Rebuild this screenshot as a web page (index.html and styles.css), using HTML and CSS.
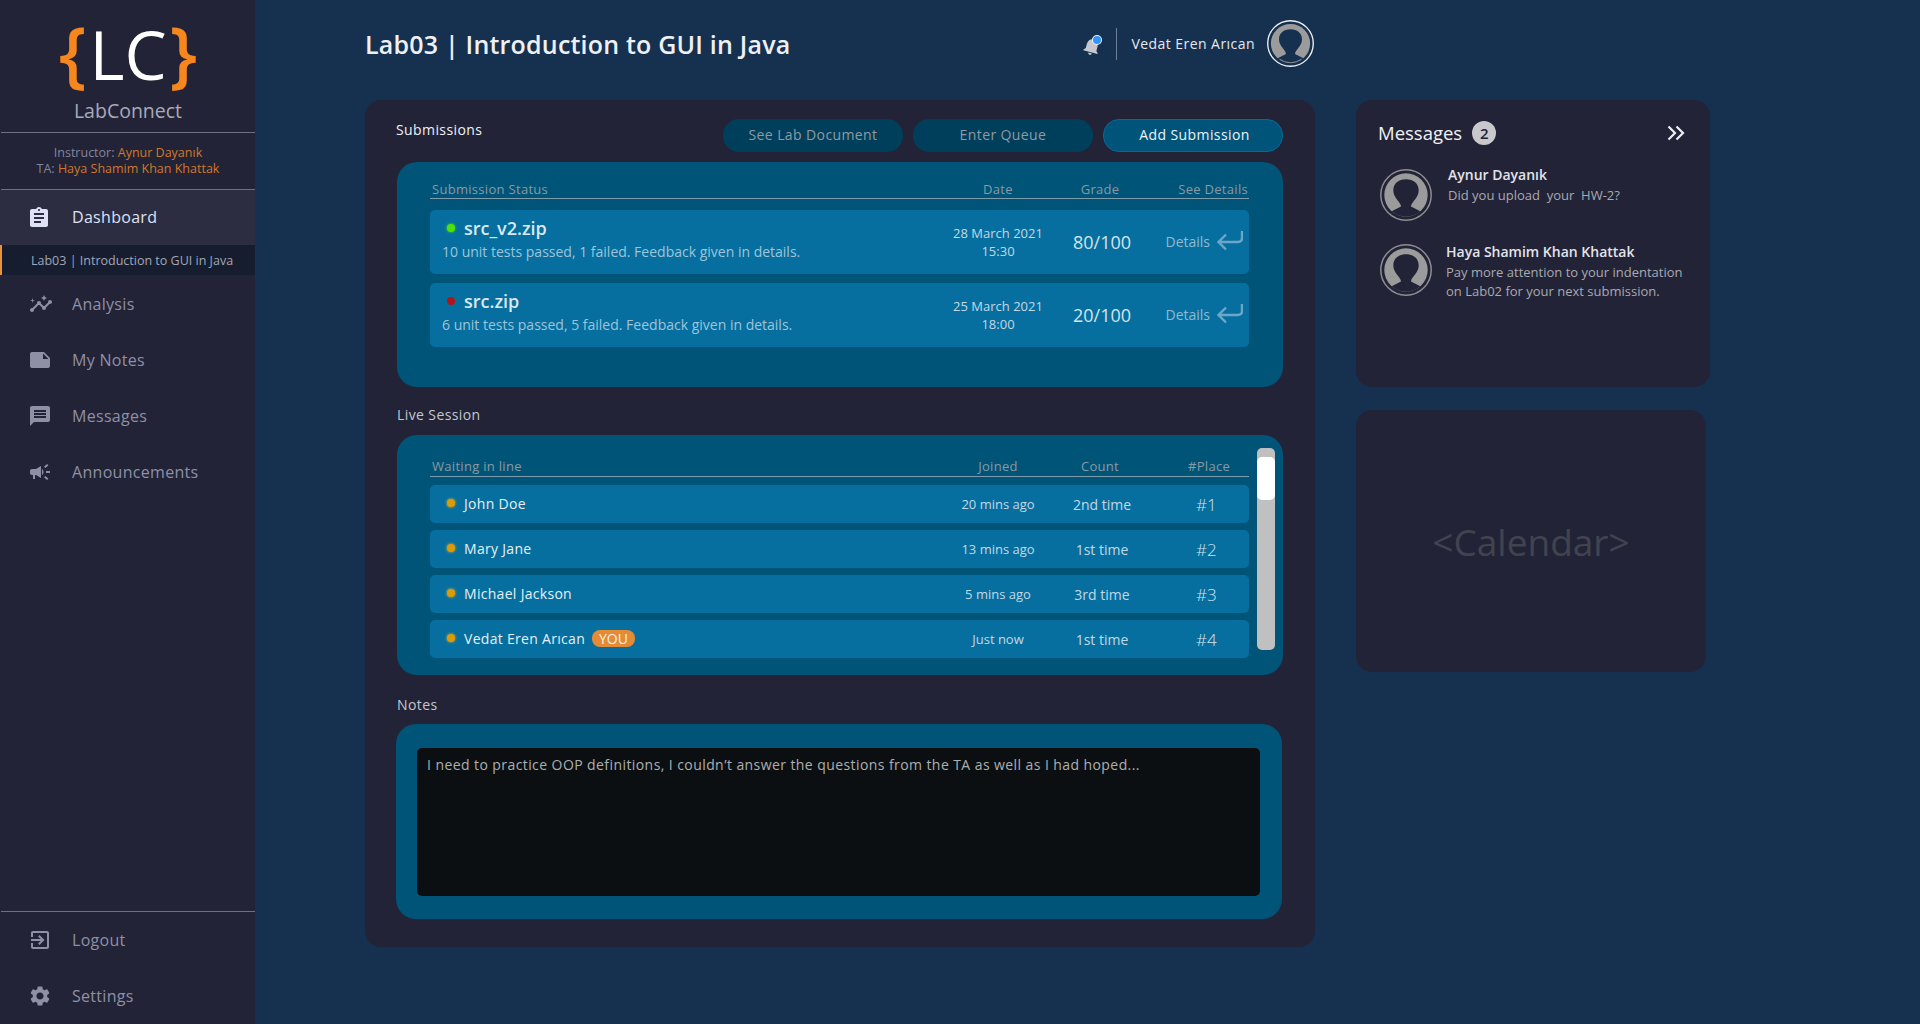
FILE: index.html
```html
<!DOCTYPE html>
<html>
<head>
  <meta charset="utf-8">
  <title>LabConnect</title>
  <link rel="stylesheet" href="styles.css">
</head>
<body>
  <svg class="defs" width="0" height="0">
    <symbol id="avatar" viewBox="0 0 52 52">
      <circle cx="26" cy="26" r="25.2" fill="none" stroke="currentColor" stroke-width="1.5"/>
      <circle cx="26" cy="26" r="21.7" fill="#9b9b9b"/>
      <path d="M11.7 42.3 L21 37.5 C21 33 13.3 29 13.3 21.5 C13.3 14.5 18.5 10.3 26 10.3 C33.5 10.3 38.7 14.5 38.7 21.5 C38.7 29 31 33 31 37.5 L40.3 42.3 A21.7 21.7 0 0 1 11.7 42.3 Z"/>
    </symbol>
    <symbol id="arrow" viewBox="0 0 26 20">
      <path d="M25 0 V7 Q25 11 21 11 H2 M9 3.5 L1.5 11 L9 18.5" fill="none" stroke="currentColor" stroke-width="2.4"/>
    </symbol>
  </svg>

  <aside class="sidebar">
    <div class="brand">
      <div class="logo"><span class="brace">{</span><span class="logo-lc">LC</span><span class="brace">}</span></div>
      <div class="brand-name">LabConnect</div>
    </div>
    <div class="staff">
      <div>Instructor: <span class="staff-name">Aynur Dayanık</span></div>
      <div>TA: <span class="staff-name">Haya Shamim Khan Khattak</span></div>
    </div>

    <nav class="nav">
      <div class="nav-item active">
        <svg class="nav-icon" viewBox="0 0 24 24"><path d="M19 3h-4.18C14.4 1.84 13.3 1 12 1c-1.3 0-2.4.84-2.82 2H5c-1.1 0-2 .9-2 2v14c0 1.1.9 2 2 2h14c1.1 0 2-.9 2-2V5c0-1.1-.9-2-2-2zm-7 0c.55 0 1 .45 1 1s-.45 1-1 1-1-.45-1-1 .45-1 1-1zm2 14H7v-2h7v2zm3-4H7v-2h10v2zm0-4H7V7h10v2z"/></svg>
        <span>Dashboard</span>
      </div>
      <div class="nav-sub">Lab03 | Introduction to GUI in Java</div>
      <div class="nav-item">
        <svg class="nav-icon insights" viewBox="0 0 24 24"><path d="M21 8c-1.45 0-2.26 1.44-1.93 2.51l-3.55 3.56c-.3-.09-.74-.09-1.04 0l-2.55-2.55C12.27 10.45 11.46 9 10 9c-1.45 0-2.27 1.44-1.93 2.52l-4.56 4.55C2.44 15.74 1 16.55 1 18c0 1.1.9 2 2 2 1.45 0 2.26-1.44 1.93-2.51l4.55-4.56c.3.09.74.09 1.04 0l2.55 2.55C12.73 16.55 13.54 18 15 18c1.45 0 2.27-1.44 1.93-2.52l3.56-3.55c1.07.33 2.51-.48 2.51-1.93 0-1.1-.9-2-2-2z"/><path d="M15 9l.94-2.07L18 6l-2.06-.93L15 3l-.92 2.07L12 6l2.08.93zM3.5 11L4 9l2-.5L4 8l-.5-2L3 8l-2 .5L3 9z"/></svg>
        <span>Analysis</span>
      </div>
      <div class="nav-item">
        <svg class="nav-icon" viewBox="0 0 24 24"><path d="M22 10l-6-6H4c-1.1 0-2 .9-2 2v12.01c0 1.1.9 1.99 2 1.99l16-.01c1.1 0 2-.89 2-1.99v-8zm-7-4.5l5.5 5.5H15V5.5z"/></svg>
        <span>My Notes</span>
      </div>
      <div class="nav-item">
        <svg class="nav-icon" viewBox="0 0 24 24"><path d="M20 2H4c-1.1 0-1.99.9-1.99 2L2 22l4-4h14c1.1 0 2-.9 2-2V4c0-1.1-.9-2-2-2zm-2 12H6v-2h12v2zm0-3H6V9h12v2zm0-3H6V6h12v2z"/></svg>
        <span>Messages</span>
      </div>
      <div class="nav-item">
        <svg class="nav-icon" viewBox="0 0 24 24"><path d="M18 11v2h4v-2h-4zm-2 6.61c.96.71 2.21 1.65 3.2 2.39.4-.53.8-1.07 1.2-1.6-.99-.74-2.24-1.68-3.2-2.4-.4.54-.8 1.08-1.2 1.61zM20.4 5.6c-.4-.53-.8-1.07-1.2-1.6-.99.74-2.24 1.68-3.2 2.4.4.53.8 1.07 1.2 1.6.96-.72 2.21-1.65 3.2-2.4zM4 9c-1.1 0-2 .9-2 2v2c0 1.1.9 2 2 2h1v4h2v-4h1l5 3V6L8 9H4zm11.5 3c0-1.33-.58-2.53-1.5-3.35v6.69c.92-.81 1.5-2.01 1.5-3.34z"/></svg>
        <span>Announcements</span>
      </div>
    </nav>

    <div class="nav-bottom">
      <div class="nav-item">
        <svg class="nav-icon" viewBox="0 0 24 24"><path d="M10.09 15.59L11.5 17l5-5-5-5-1.41 1.41L12.67 11H3v2h9.67l-2.58 2.59zM19 3H5c-1.11 0-2 .9-2 2v4h2V5h14v14H5v-4H3v4c0 1.1.89 2 2 2h14c1.1 0 2-.9 2-2V5c0-1.1-.9-2-2-2z"/></svg>
        <span>Logout</span>
      </div>
      <div class="nav-item">
        <svg class="nav-icon" viewBox="0 0 24 24"><path d="M19.14 12.94c.04-.3.06-.61.06-.94 0-.32-.02-.64-.07-.94l2.03-1.58c.18-.14.23-.41.12-.61l-1.92-3.32c-.12-.22-.37-.29-.59-.22l-2.39.96c-.5-.38-1.03-.7-1.62-.94l-.36-2.54c-.04-.24-.24-.41-.48-.41h-3.84c-.24 0-.43.17-.47.41l-.36 2.54c-.59.24-1.13.57-1.62.94l-2.39-.96c-.22-.08-.47 0-.59.22L2.74 8.87c-.12.21-.08.47.12.61l2.03 1.58c-.05.3-.09.63-.09.94s.02.64.07.94l-2.03 1.58c-.18.14-.23.41-.12.61l1.92 3.32c.12.22.37.29.59.22l2.39-.96c.5.38 1.03.7 1.62.94l.36 2.54c.05.24.24.41.48.41h3.84c.24 0 .44-.17.47-.41l.36-2.54c.59-.24 1.13-.56 1.62-.94l2.39.96c.22.08.47 0 .59-.22l1.92-3.32c.12-.22.07-.47-.12-.61l-2.01-1.58zM12 15.6c-1.98 0-3.6-1.62-3.6-3.6s1.62-3.6 3.6-3.6 3.6 1.62 3.6 3.6-1.62 3.6-3.6 3.6z"/></svg>
        <span>Settings</span>
      </div>
    </div>
  </aside>

  <div class="page">
    <header class="topbar">
      <h1 class="page-title">Lab03 | Introduction to GUI in Java</h1>
      <div class="user">
        <div class="bell">
          <svg class="bell-icon" viewBox="0 0 24 24"><path d="M12 22c1.1 0 2-.9 2-2h-4c0 1.1.9 2 2 2zm6-6v-5c0-3.07-1.63-5.64-4.5-6.32V4c0-.83-.67-1.5-1.5-1.5s-1.5.67-1.5 1.5v.68C7.64 5.36 6 7.92 6 11v5l-2 2v1h16v-1l-2-2z"/></svg>
          <span class="bell-dot"></span>
        </div>
        <span class="user-name">Vedat Eren Arıcan</span>
        <svg class="user-avatar" viewBox="0 0 52 52">
          <use href="#avatar"/>
          <path d="M14 43.5 A21 21 0 0 0 38 43.5" fill="none" stroke="#9b9b9b" stroke-width="1"/>
        </svg>
      </div>
    </header>

    <div class="columns">
      <main class="main-card">
        <div class="card-head">
          <div class="section-title first">Submissions</div>
          <div class="actions">
            <button class="btn">See Lab Document</button>
            <button class="btn">Enter Queue</button>
            <button class="btn primary">Add Submission</button>
          </div>
        </div>

        <section class="panel submissions">
          <div class="table-head">
            <span>Submission Status</span>
            <span class="center">Date</span>
            <span class="center head-grade">Grade</span>
            <span class="right">See Details</span>
          </div>
          <div class="rows">
            <div class="row sub-row">
              <div class="file">
                <div class="file-name"><span class="dot green"></span>src_v2.zip</div>
                <div class="file-info">10 unit tests passed, 1 failed. Feedback given in details.</div>
              </div>
              <div class="date">28 March 2021<br>15:30</div>
              <div class="grade">80/100</div>
              <div class="details">Details <svg class="arrow"><use href="#arrow"/></svg></div>
            </div>
            <div class="row sub-row">
              <div class="file">
                <div class="file-name"><span class="dot red"></span>src.zip</div>
                <div class="file-info">6 unit tests passed, 5 failed. Feedback given in details.</div>
              </div>
              <div class="date">25 March 2021<br>18:00</div>
              <div class="grade">20/100</div>
              <div class="details">Details <svg class="arrow"><use href="#arrow"/></svg></div>
            </div>
          </div>
        </section>

        <div class="section-title">Live Session</div>
        <section class="panel live">
          <div class="live-list">
            <div class="table-head">
              <span>Waiting in line</span>
              <span class="center">Joined</span>
              <span class="center head-grade">Count</span>
              <span class="head-place">#Place</span>
            </div>
            <div class="rows live-rows">
              <div class="row queue-row">
                <div class="person"><span class="dot amber"></span>John Doe</div>
                <div class="joined">20 mins ago</div>
                <div class="count">2nd time</div>
                <div class="place">#1</div>
              </div>
              <div class="row queue-row">
                <div class="person"><span class="dot amber"></span>Mary Jane</div>
                <div class="joined">13 mins ago</div>
                <div class="count">1st time</div>
                <div class="place">#2</div>
              </div>
              <div class="row queue-row">
                <div class="person"><span class="dot amber"></span>Michael Jackson</div>
                <div class="joined">5 mins ago</div>
                <div class="count">3rd time</div>
                <div class="place">#3</div>
              </div>
              <div class="row queue-row">
                <div class="person"><span class="dot amber"></span>Vedat Eren Arıcan <span class="you">YOU</span></div>
                <div class="joined">Just now</div>
                <div class="count">1st time</div>
                <div class="place">#4</div>
              </div>
            </div>
          </div>
          <div class="scrollbar"><div class="scroll-thumb"></div></div>
        </section>

        <div class="section-title notes-title">Notes</div>
        <section class="panel notes">
          <div class="note-box">I need to practice OOP definitions, I couldn’t answer the questions from the TA as well as I had hoped...</div>
        </section>
      </main>

      <div class="side-col">
        <section class="messages-card">
          <div class="messages-head">
            <span class="messages-title">Messages</span>
            <span class="badge">2</span>
            <svg class="chevrons" viewBox="0 0 18 16"><path d="M1.5 1.5 L8 8 L1.5 14.5 M9.5 1.5 L16 8 L9.5 14.5" fill="none" stroke="#eceef6" stroke-width="2.2"/></svg>
          </div>
          <div class="message">
            <svg class="msg-avatar" viewBox="0 0 52 52"><use href="#avatar"/></svg>
            <div class="msg-text first-msg">
              <div class="msg-name">Aynur Dayanık</div>
              <div class="msg-body">Did you upload&nbsp; your&nbsp; HW-2?</div>
            </div>
          </div>
          <div class="message">
            <svg class="msg-avatar" viewBox="0 0 52 52"><use href="#avatar"/></svg>
            <div class="msg-text">
              <div class="msg-name">Haya Shamim Khan Khattak</div>
              <div class="msg-body">Pay more attention to your indentation<br>on Lab02 for your next submission.</div>
            </div>
          </div>
        </section>
        <section class="calendar-card">&lt;Calendar&gt;</section>
      </div>
    </div>
  </div>
</body>
</html>
```

FILE: styles.css
```css
* {
  box-sizing: border-box;
}

body {
  margin: 0;
  height: 1024px;
  overflow: hidden;
  display: flex;
  background: #16304f;
  font-family: "Open Sans", "Noto Sans", sans-serif;
  color: #fff;
}

.defs {
  position: absolute;
}

/* sidebar */
.sidebar {
  width: 255px;
  height: 1024px;
  flex: none;
  display: flex;
  flex-direction: column;
  background: #222336;
}

.brand {
  height: 133px;
  margin-left: 1px;
  border-bottom: 1px solid #6e6f80;
  text-align: center;
}

.logo {
  height: 96px;
  padding-top: 12px;
  font-size: 67px;
  line-height: 80px;
  font-weight: 400;
}

.brace {
  font-size: 72px;
  font-weight: 600;
  color: #f6871f;
}

.logo-lc {
  color: #fff;
  margin: 0 3px;
}

.brand-name {
  font-size: 19.5px;
  line-height: 30px;
  color: #a9aaba;
}

.staff {
  height: 57px;
  margin-left: 1px;
  padding-top: 12px;
  border-bottom: 1px solid #6e6f80;
  text-align: center;
  font-size: 12.5px;
  line-height: 16px;
  color: #84859a;
}

.staff-name {
  color: #d1782a;
}

.nav-item {
  height: 56px;
  display: flex;
  align-items: center;
  gap: 20px;
  padding-left: 28px;
  font-size: 16px;
  letter-spacing: 0.3px;
  color: #8f90a6;
}

.nav-icon {
  width: 24px;
  height: 24px;
  flex: none;
  fill: currentColor;
}

.insights {
  margin: 0 -1px 0 1px;
}

.nav-item.active {
  height: 55px;
  gap: 21px;
  padding-left: 27px;
  background: #2c2d40;
  color: #dfe1f6;
}

.nav-item.active span {
  padding-bottom: 1px;
}

.nav-sub {
  height: 30px;
  margin-bottom: 1px;
  border-left: 2px solid #e9923a;
  padding: 1px 0 0 29px;
  background: #161d2e;
  font-size: 12.5px;
  line-height: 30px;
  color: #a4a6b8;
}

.nav-bottom {
  margin-top: auto;
  margin-left: 1px;
  border-top: 1px solid #6e6f80;
}

.nav-bottom .nav-item {
  padding-left: 27px;
}

/* page */
.page {
  padding-left: 110px;
}

.topbar {
  width: 950px;
  height: 100px;
  display: flex;
  align-items: center;
  justify-content: space-between;
  padding-bottom: 13px;
}

.page-title {
  margin: 0;
  font-size: 25px;
  font-weight: 600;
  letter-spacing: 0.2px;
  color: #eef0f4;
}

.user {
  display: flex;
  align-items: center;
}

.bell {
  position: relative;
  width: 32px;
  height: 32px;
  margin-right: 14px;
  border-right: 1px solid #6f7f95;
}

.bell-icon {
  width: 22px;
  height: 22px;
  margin: 7px 0 0 -4px;
  fill: #c6c8ce;
  transform: rotate(15deg);
}

.bell-dot {
  position: absolute;
  top: 8px;
  left: 8px;
  width: 8px;
  height: 8px;
  border-radius: 50%;
  background: #2f95f7;
  box-shadow: 0 0 0 1px #f0f2f6;
}

.user-name {
  font-size: 14px;
  font-weight: 500;
  letter-spacing: 0.45px;
  color: #e6e8ee;
}

.user-avatar {
  width: 47px;
  height: 47px;
  margin-left: 12px;
  margin-right: 1px;
  color: #f0f0f0;
  fill: #16304f;
}

.columns {
  display: flex;
  gap: 41px;
  align-items: flex-start;
}

/* main card */
.main-card {
  width: 950px;
  height: 847px;
  padding: 19px 32px 0;
  border-radius: 16px;
  background: #222336;
}

.card-head {
  display: flex;
  justify-content: space-between;
  height: 33px;
}

.section-title {
  margin: 18px 0 10px;
  font-size: 14px;
  line-height: 20px;
  font-weight: 500;
  letter-spacing: 0.4px;
  color: #c6c7cf;
}

.section-title.first {
  margin: 1px 0 0 -1px;
  color: #f0f1f4;
}

.section-title.notes-title {
  margin: 20px 0 9px;
}

.actions {
  display: flex;
  gap: 10px;
}

.btn {
  width: 180px;
  height: 33px;
  padding-bottom: 3px;
  border: 0;
  border-radius: 16px;
  background: #003f5b;
  font-family: inherit;
  font-size: 14px;
  letter-spacing: 0.4px;
  color: #8f9aa3;
}

.btn.primary {
  border: 1px solid #06699a;
  padding-left: 9px;
  background: #00547a;
  font-weight: 500;
  color: #f0f2f5;
}

.panel {
  border-radius: 20px;
  background: #005478;
}

.submissions {
  height: 225px;
  margin-top: 10px;
  padding: 18px 34px 0 33px;
}

.table-head {
  display: grid;
  grid-template-columns: 1fr 120px 88px 103px;
  height: 19px;
  padding-left: 2px;
  border-bottom: 1px solid #7f9cae;
  font-size: 13px;
  line-height: 18px;
  letter-spacing: 0.3px;
  color: #8a99a3;
}

.live .table-head {
  line-height: 16px;
}

.center {
  text-align: center;
}

.right {
  padding-right: 1px;
  text-align: right;
}

.head-grade {
  padding-right: 4px;
}

.head-place {
  padding-left: 42px;
}

.rows {
  display: flex;
  flex-direction: column;
  gap: 9px;
  margin-top: 11px;
}

.row {
  display: grid;
  grid-template-columns: 1fr 120px 88px 103px;
  align-items: center;
  border-radius: 5px;
  background: #066f9f;
}

.sub-row {
  height: 64px;
  padding-left: 12px;
}

.file {
  padding-bottom: 4px;
}

.file-name {
  display: flex;
  align-items: center;
  padding-left: 5px;
  font-size: 18px;
  line-height: 24px;
  font-weight: 600;
  color: #dce8f0;
}

.file-info {
  font-size: 14px;
  line-height: 24px;
  color: #9fc4da;
}

.dot {
  width: 8px;
  height: 8px;
  flex: none;
  margin-right: 9px;
  border-radius: 50%;
}

.green {
  background: #4fe30b;
  box-shadow: 0 0 3px #4fe30b;
}

.red {
  background: #b3141a;
}

.amber {
  background: #dd9c06;
  box-shadow: 0 0 3px #e8b020;
}

.date {
  text-align: center;
  font-size: 13px;
  line-height: 18px;
  color: #c3d8e5;
}

.grade {
  text-align: center;
  font-size: 18px;
  color: #d5e3ec;
}

.details {
  display: flex;
  align-items: center;
  justify-content: flex-end;
  gap: 7px;
  padding: 0 6px 2px 0;
  font-size: 14px;
  color: #8fbad2;
}

.arrow {
  width: 26px;
  height: 20px;
  color: #6da6c6;
}

/* live session */
.live {
  height: 240px;
  display: flex;
  padding: 13px 8px 0 33px;
}

.live-list {
  flex: 1;
  padding-top: 10px;
}

.live-rows {
  gap: 7px;
  margin-top: 8px;
}

.queue-row {
  height: 38px;
  padding-left: 17px;
}

.person {
  display: flex;
  align-items: center;
  padding-bottom: 2px;
  font-size: 14px;
  font-weight: 500;
  letter-spacing: 0.3px;
  color: #e6eff5;
}

.you {
  margin-left: 7px;
  padding: 0 7px;
  border-radius: 8px;
  background: #e38b35;
  font-size: 14px;
  line-height: 17px;
  font-weight: 400;
  letter-spacing: 0;
  color: #f6f0e8;
}

.joined {
  text-align: center;
  font-size: 13px;
  color: #c3d8e5;
}

.count {
  text-align: center;
  font-size: 14px;
  color: #c3d8e5;
}

.place {
  padding-left: 50px;
  font-size: 17px;
  font-weight: 300;
  color: #d5e3ec;
}

.scrollbar {
  width: 18px;
  height: 202px;
  margin-left: 8px;
  padding-top: 9px;
  border-radius: 5px;
  background: #c0c0c0;
}

.scroll-thumb {
  height: 43px;
  border-radius: 5px;
  background: #fff;
}

/* notes */
.notes {
  height: 195px;
  margin: 0 1px 0 -1px;
  padding: 24px 22px 23px 21px;
}

.note-box {
  height: 148px;
  padding: 7px 10px;
  border-radius: 5px;
  background: #0c0f12;
  font-size: 14px;
  line-height: 20px;
  font-weight: 500;
  letter-spacing: 0.42px;
  color: #adafb1;
}

/* right column */
.side-col {
  width: 354px;
}

.messages-card {
  height: 287px;
  padding: 18px 25px 0 22px;
  border-radius: 16px;
  background: #222336;
}

.messages-head {
  display: flex;
  align-items: center;
  height: 30px;
}

.messages-title {
  padding-bottom: 2px;
  font-size: 18.5px;
  font-weight: 500;
  color: #f0f1f4;
}

.badge {
  width: 24px;
  height: 24px;
  margin-left: 10px;
  border-radius: 50%;
  background: #c9c9cd;
  text-align: center;
  font-size: 15px;
  line-height: 24px;
  font-weight: 600;
  color: #222336;
}

.chevrons {
  width: 18px;
  height: 16px;
  margin-left: auto;
}

.message {
  display: flex;
  gap: 14px;
  margin-top: 23px;
  padding-left: 2px;
}

.messages-head + .message {
  margin-top: 21px;
}

.msg-avatar {
  width: 52px;
  height: 52px;
  flex: none;
  color: #8e8e92;
  fill: #222336;
}

.msg-text {
  margin-top: -2px;
}

.msg-text.first-msg {
  margin-top: -4px;
  padding-left: 2px;
}

.msg-name {
  margin-bottom: 1px;
  font-size: 14px;
  line-height: 20px;
  font-weight: 600;
  color: #e2e3ea;
}

.msg-body {
  font-size: 13px;
  line-height: 19px;
  color: #a9aab2;
}

.calendar-card {
  width: 350px;
  height: 262px;
  margin-top: 23px;
  display: flex;
  align-items: center;
  justify-content: center;
  border-radius: 16px;
  background: #222336;
  font-size: 37px;
  font-weight: 500;
  color: #42434f;
}
```
